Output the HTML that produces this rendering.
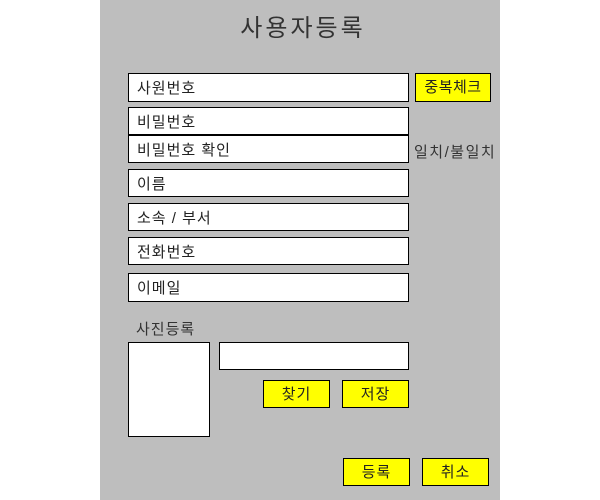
<!DOCTYPE html>
<html><head><meta charset="utf-8"><style>
body{margin:0;width:600px;height:500px;background:#fff;position:relative;font-family:"Liberation Sans","Noto Sans CJK KR",sans-serif;}
.p{position:absolute;left:100px;top:0;width:400px;height:500px;background:#bebebe;}
.a{position:absolute;box-sizing:border-box;}
.i{background:#fff;border:1px solid #000;font-size:15px;color:#222;padding-left:8px;line-height:29px;letter-spacing:1px;}
.b{background:#ff0;border:1px solid #000;font-size:15px;color:#222;text-align:center;line-height:28px;letter-spacing:1px;}
.t{font-size:15px;color:#333;letter-spacing:1px;}
</style></head><body>
<div class="p"></div>
<div class="a" style="left:200px;top:8px;width:206px;text-align:center;font-size:24px;color:#333;letter-spacing:3px;">사용자등록</div>
<div class="a i" style="left:128px;top:73px;width:281px;height:29px;">사원번호</div>
<div class="a b" style="left:415px;top:73px;width:76px;height:29px;letter-spacing:0.5px;">중복체크</div>
<div class="a i" style="left:128px;top:107px;width:281px;height:28px;">비밀번호</div>
<div class="a i" style="left:128px;top:135px;width:281px;height:28px;">비밀번호 확인</div>
<div class="a t" style="left:414px;top:141px;letter-spacing:1.5px;">일치/불일치</div>
<div class="a i" style="left:128px;top:169px;width:281px;height:28px;">이름</div>
<div class="a i" style="left:128px;top:203px;width:281px;height:28px;">소속 / 부서</div>
<div class="a i" style="left:128px;top:237px;width:281px;height:28px;">전화번호</div>
<div class="a i" style="left:128px;top:273px;width:281px;height:29px;">이메일</div>
<div class="a t" style="left:136px;top:318px;">사진등록</div>
<div class="a" style="left:128px;top:342px;width:82px;height:95px;background:#fff;border:1px solid #000;"></div>
<div class="a" style="left:219px;top:342px;width:190px;height:28px;background:#fff;border:1px solid #000;"></div>
<div class="a b" style="left:263px;top:380px;width:67px;height:28px;">찾기</div>
<div class="a b" style="left:342px;top:380px;width:67px;height:28px;">저장</div>
<div class="a b" style="left:343px;top:458px;width:67px;height:28px;">등록</div>
<div class="a b" style="left:422px;top:458px;width:67px;height:28px;">취소</div>
</body></html>
